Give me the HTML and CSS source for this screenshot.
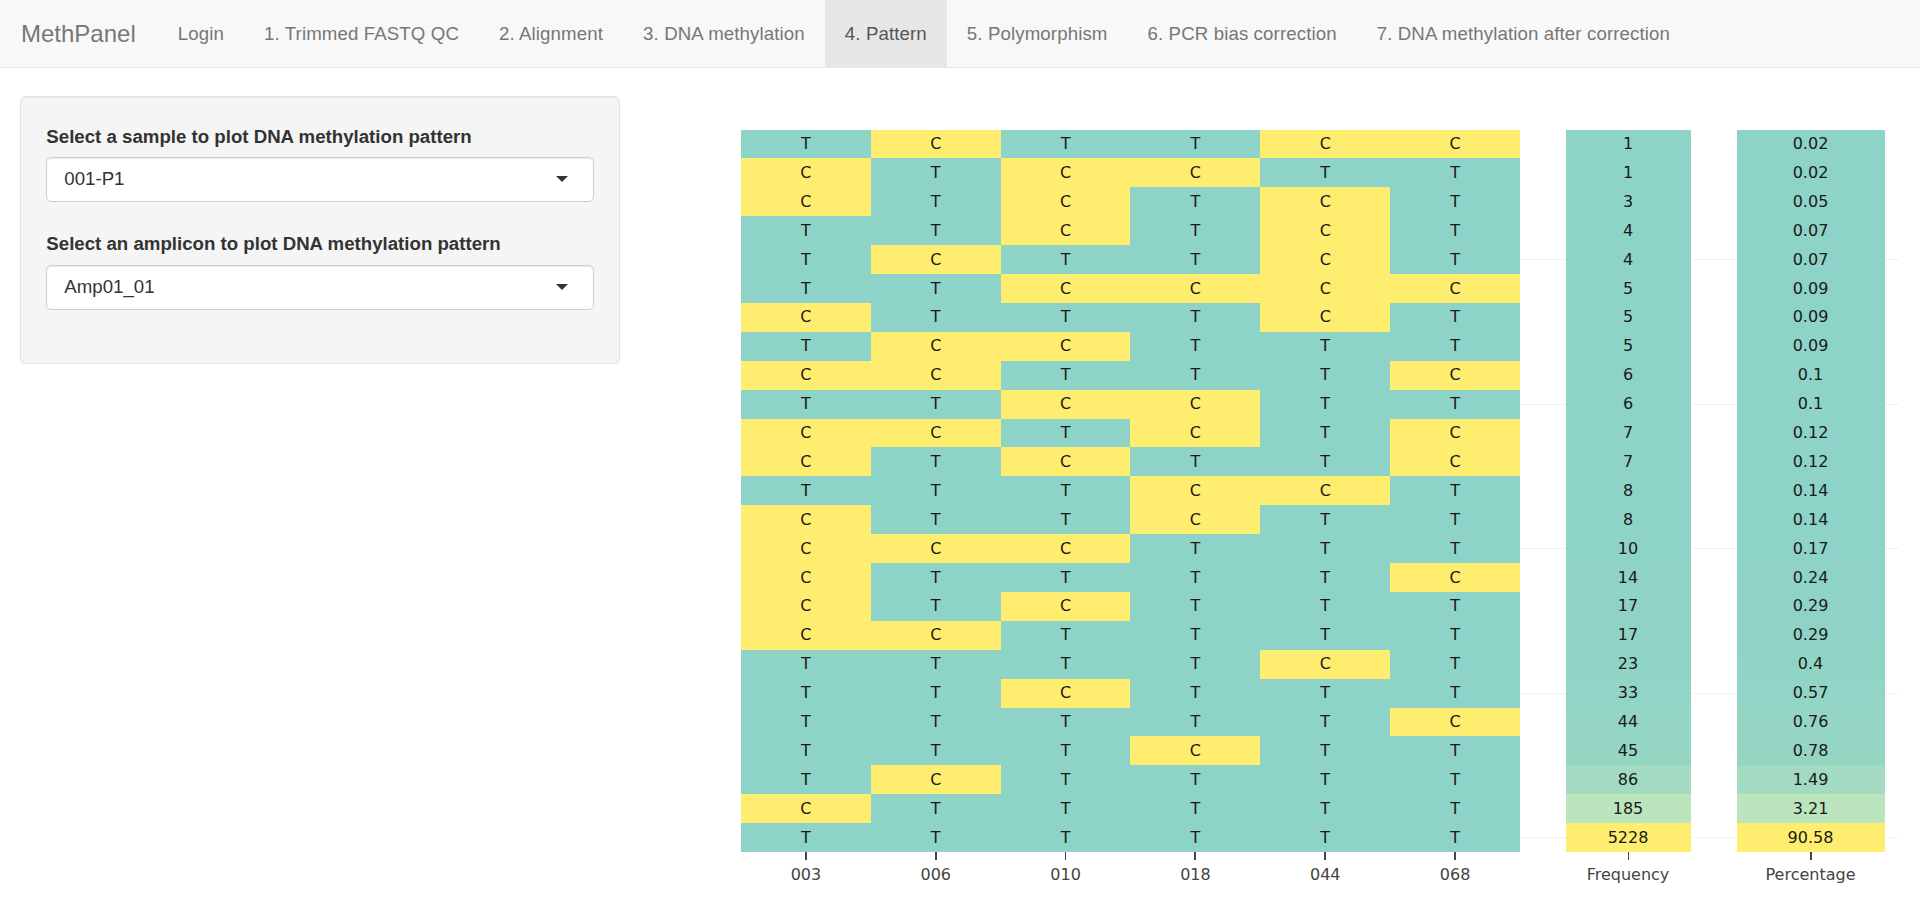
FILE: index.html
```html
<!DOCTYPE html>
<html>
<head>
<meta charset="utf-8">
<title>MethPanel</title>
<link rel="stylesheet" href="styles.css">
</head>
<body>
<nav class="navbar">
  <span class="brand">MethPanel</span>
  <ul class="nav">
    <li>Login</li>
    <li>1. Trimmed FASTQ QC</li>
    <li>2. Alignment</li>
    <li>3. DNA methylation</li>
    <li class="active">4. Pattern</li>
    <li>5. Polymorphism</li>
    <li>6. PCR bias correction</li>
    <li>7. DNA methylation after correction</li>
  </ul>
</nav>
<div class="content">
  <div class="sidebar">
    <div class="well">
      <div class="form-group">
        <label class="control-label">Select a sample to plot DNA methylation pattern</label>
        <div class="select"><span>001-P1</span><i class="caret"></i></div>
      </div>
      <div class="form-group">
        <label class="control-label">Select an amplicon to plot DNA methylation pattern</label>
        <div class="select"><span>Amp01_01</span><i class="caret"></i></div>
      </div>
    </div>
  </div>
  <div class="main">
    <div class="plot">
      <div class="block block-heat">
        <div class="heat" id="heat"></div>
        <div class="ticks six"><i></i><i></i><i></i><i></i><i></i><i></i></div>
        <div class="labels six"><span>003</span><span>006</span><span>010</span><span>018</span><span>044</span><span>068</span></div>
      </div>
      <div class="gap"></div>
      <div class="block block-freq">
        <div class="col" id="freq"></div>
        <div class="ticks"><i></i></div>
        <div class="labels"><span>Frequency</span></div>
      </div>
      <div class="gap gap2"></div>
      <div class="block block-pct">
        <div class="col" id="pct"></div>
        <div class="ticks"><i></i></div>
        <div class="labels"><span>Percentage</span></div>
      </div>
      <div class="gap gap3"></div>
    </div>
  </div>
</div>
<script src="app.js"></script>
</body>
</html>
```
FILE: styles.css
```css
* { box-sizing: border-box; }
html, body { margin: 0; padding: 0; background: #fff; }
body {
  font-family: "Liberation Sans", Arial, Helvetica, sans-serif;
  font-size: 18.67px;
  color: #333;
  width: 1920px;
  height: 905px;
  overflow: hidden;
}
.navbar {
  display: flex;
  align-items: stretch;
  height: 68px;
  background: #f8f8f8;
  border-bottom: 1px solid #e7e7e7;
}
.brand {
  display: block;
  padding: 0 21px 0 21px;
  line-height: 67px;
  font-size: 24px;
  color: #777;
}
.nav {
  display: flex;
  list-style: none;
  margin: 0 0 0 1px;
  padding: 0;
}
.nav li {
  padding: 0 20px;
  line-height: 67px;
  height: 67px;
  color: #777;
  font-size: 18.67px;
  letter-spacing: 0.115px;
}
.nav li.active {
  background: #e7e7e7;
  color: #555;
}
.content {
  display: flex;
  margin-top: 28px;
}
.sidebar {
  width: 640px;
  padding: 0 20px;
  flex: none;
}
.well {
  background: #f5f5f5;
  border: 1.33px solid #e3e3e3;
  border-radius: 5.33px;
  box-shadow: inset 0 1px 1px rgba(0,0,0,.05);
  padding: 27px 25.33px 6px 25.33px;
  height: 267.5px;
}
.form-group { margin-bottom: 29px; }
.control-label {
  display: block;
  font-weight: bold;
  line-height: 26.67px;
  margin-bottom: 6.67px;
  color: #333;
}
.select {
  position: relative;
  height: 45px;
  background: #fff;
  border: 1.33px solid #ccc;
  border-radius: 5.33px;
  box-shadow: inset 0 1px 1px rgba(0,0,0,.075);
  padding: 0 17px;
  line-height: 42px;
  color: #333;
}
.caret {
  position: absolute;
  right: 25px;
  top: 18px;
  width: 0;
  height: 0;
  border-left: 6.67px solid transparent;
  border-right: 6.67px solid transparent;
  border-top: 6.67px solid #333;
}
.main {
  flex: 1;
  padding: 0 20px;
}
.plot {
  display: flex;
  padding-top: 33.6px;
  padding-left: 81px;
  font-family: "DejaVu Sans", Verdana, sans-serif;
  font-size: 16px;
}
.block { display: flex; flex-direction: column; flex: none; }
.block-heat { width: 779px; }
.block-freq { width: 125px; }
.block-pct { width: 148px; }
.gap {
  flex: none;
  width: 45.5px;
  height: 722.5px;
  background-image: linear-gradient(to bottom,
    transparent 129.2px, #f1f1f1 129.2px, #f1f1f1 130.4px, transparent 130.4px,
    transparent 273.7px, #f1f1f1 273.7px, #f1f1f1 274.9px, transparent 274.9px,
    transparent 418.2px, #f1f1f1 418.2px, #f1f1f1 419.4px, transparent 419.4px,
    transparent 562.7px, #f1f1f1 562.7px, #f1f1f1 563.9px, transparent 563.9px,
    transparent 707.2px, #f1f1f1 707.2px, #f1f1f1 708.4px, transparent 708.4px);
}
.gap2 { width: 46px; }
.gap3 { width: 14px; }
.heat {
  display: grid;
  grid-template-columns: repeat(6, 1fr);
  grid-template-rows: repeat(25, 1fr);
  height: 722.5px;
}
.col {
  display: grid;
  grid-template-rows: repeat(25, 1fr);
  height: 722.5px;
}
.cell {
  display: flex;
  align-items: center;
  justify-content: center;
  color: #1a1a1a;
  line-height: 1;
}
.cell.t { background: #8dd3c7; }
.cell.c { background: #ffed6f; }
.ticks {
  display: flex;
  height: 8px;
}
.ticks i {
  flex: 1;
  display: block;
  background: linear-gradient(to right, transparent calc(50% - 0.67px), #444 calc(50% - 0.67px), #444 calc(50% + 0.67px), transparent calc(50% + 0.67px));
}
.labels {
  display: flex;
  margin-top: 5px;
  line-height: 20px;
  color: #444;
}
.labels span {
  flex: 1;
  text-align: center;
}
```
FILE: app.js
```js
var rows = [
  ["TCTTCC", 1, "0.02"],
  ["CTCCTT", 1, "0.02"],
  ["CTCTCT", 3, "0.05"],
  ["TTCTCT", 4, "0.07"],
  ["TCTTCT", 4, "0.07"],
  ["TTCCCC", 5, "0.09"],
  ["CTTTCT", 5, "0.09"],
  ["TCCTTT", 5, "0.09"],
  ["CCTTTC", 6, "0.1"],
  ["TTCCTT", 6, "0.1"],
  ["CCTCTC", 7, "0.12"],
  ["CTCTTC", 7, "0.12"],
  ["TTTCCT", 8, "0.14"],
  ["CTTCTT", 8, "0.14"],
  ["CCCTTT", 10, "0.17"],
  ["CTTTTC", 14, "0.24"],
  ["CTCTTT", 17, "0.29"],
  ["CCTTTT", 17, "0.29"],
  ["TTTTCT", 23, "0.4"],
  ["TTCTTT", 33, "0.57"],
  ["TTTTTC", 44, "0.76"],
  ["TTTCTT", 45, "0.78"],
  ["TCTTTT", 86, "1.49"],
  ["CTTTTT", 185, "3.21"],
  ["TTTTTT", 5228, "90.58"]
];
var colorMap = {1:"#8dd3c7",3:"#8dd3c7",4:"#8dd3c7",5:"#8dd3c7",6:"#8dd3c7",7:"#8dd3c7",8:"#8dd3c7",10:"#8ed3c7",
  14:"#8ed3c6",17:"#8fd3c6",23:"#90d4c5",33:"#92d4c5",44:"#94d5c4",45:"#94d5c4",86:"#a3dbc2",185:"#bce4bd",5228:"#ffed6f"};
var heat = document.getElementById("heat");
var freq = document.getElementById("freq");
var pct = document.getElementById("pct");
rows.forEach(function (r) {
  r[0].split("").forEach(function (ch) {
    var d = document.createElement("div");
    d.className = "cell " + (ch === "T" ? "t" : "c");
    d.textContent = ch;
    heat.appendChild(d);
  });
  var f = document.createElement("div");
  f.className = "cell";
  f.style.background = colorMap[r[1]];
  f.textContent = r[1];
  freq.appendChild(f);
  var p = document.createElement("div");
  p.className = "cell";
  p.style.background = colorMap[r[1]];
  p.textContent = r[2];
  pct.appendChild(p);
});
```
